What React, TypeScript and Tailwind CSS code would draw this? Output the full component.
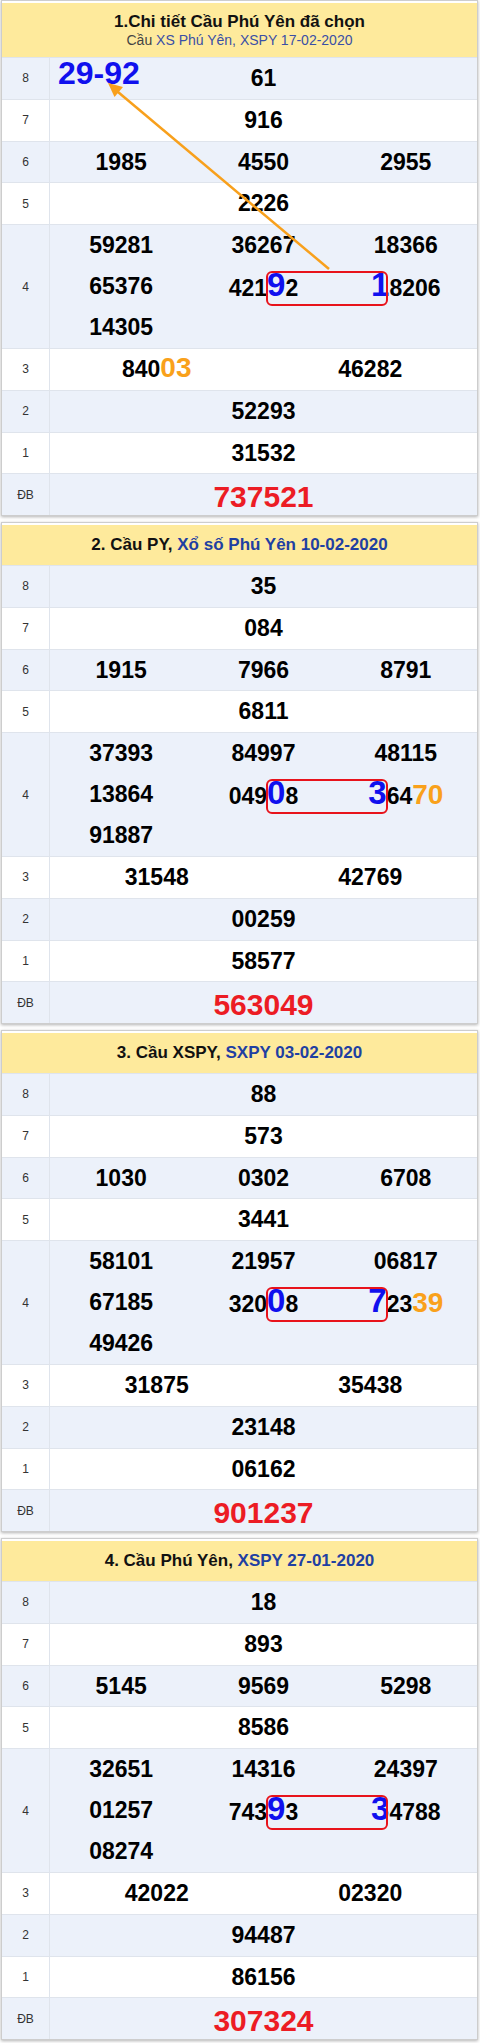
import type { ReactNode } from "react";

type Block = {
  head: ReactNode;
  tall?: boolean;
  r8: string;
  r7: string;
  r6: string[];
  r5: string;
  r4: string[][];
  r3: string[];
  r2: string;
  r1: string;
  db: string;
};

const blue = "text-[#1f40a2]";

const blocks: Block[] = [
  {
    tall: true,
    head: (
      <div className="flex flex-col items-center">
        <div className="text-[17px] leading-[20px] font-bold text-[#111]">1.Chi tiết Cầu Phú Yên đã chọn</div>
        <div className="text-[14px] leading-[17px] text-[#3a4fa6]">
          <span className="text-[#444]">Cầu</span> XS Phú Yên, XSPY 17-02-2020
        </div>
      </div>
    ),
    r8: "61",
    r7: "916",
    r6: ["1985", "4550", "2955"],
    r5: "2226",
    r4: [["59281", "36267", "18366"], ["65376", "421[9]2", "[1]8206"], ["14305"]],
    r3: ["840{03}", "46282"],
    r2: "52293",
    r1: "31532",
    db: "737521",
  },
  {
    head: (
      <div className="text-[17px] font-bold text-[#111]">
        2. Cầu PY, <span className={blue}>Xổ số Phú Yên 10-02-2020</span>
      </div>
    ),
    r8: "35",
    r7: "084",
    r6: ["1915", "7966", "8791"],
    r5: "6811",
    r4: [["37393", "84997", "48115"], ["13864", "049[0]8", "[3]64{70}"], ["91887"]],
    r3: ["31548", "42769"],
    r2: "00259",
    r1: "58577",
    db: "563049",
  },
  {
    head: (
      <div className="text-[17px] font-bold text-[#111]">
        3. Cầu XSPY, <span className={blue}>SXPY 03-02-2020</span>
      </div>
    ),
    r8: "88",
    r7: "573",
    r6: ["1030", "0302", "6708"],
    r5: "3441",
    r4: [["58101", "21957", "06817"], ["67185", "320[0]8", "[7]23{39}"], ["49426"]],
    r3: ["31875", "35438"],
    r2: "23148",
    r1: "06162",
    db: "901237",
  },
  {
    head: (
      <div className="text-[17px] font-bold text-[#111]">
        4. Cầu Phú Yên, <span className={blue}>XSPY 27-01-2020</span>
      </div>
    ),
    r8: "18",
    r7: "893",
    r6: ["5145", "9569", "5298"],
    r5: "8586",
    r4: [["32651", "14316", "24397"], ["01257", "743[9]3", "[3]4788"], ["08274"]],
    r3: ["42022", "02320"],
    r2: "94487",
    r1: "86156",
    db: "307324",
  },
];

// [x] = big blue digit, {x} = big orange digits
function Num({ s }: { s: string }) {
  const parts = s.match(/\[[^\]]+\]|\{[^}]+\}|[^[{]+/g) || [];
  return (
    <span className="text-[23px] font-bold text-black">
      {parts.map((p, i) => {
        if (p.startsWith("["))
          return (
            <span key={i} className="text-[33px] leading-none text-[#1010ee]">
              {p.slice(1, -1)}
            </span>
          );
        if (p.startsWith("{"))
          return (
            <span key={i} className="text-[28px] leading-none text-[#f9a11b]">
              {p.slice(1, -1)}
            </span>
          );
        return <span key={i}>{p}</span>;
      })}
    </span>
  );
}

const cols: Record<number, string> = { 1: "grid-cols-1", 2: "grid-cols-2", 3: "grid-cols-3" };

function Row({ label, items, alt, db, extra }: { label: string; items: string[]; alt: boolean; db?: boolean; extra?: ReactNode }) {
  return (
    <div className={`flex h-[41.75px] border-t border-[#dfe4ec] ${alt ? "bg-[#ecf1fa]" : "bg-white"}`}>
      <div className="w-[48px] shrink-0 border-r border-[#dfe4ec] flex items-center justify-center text-[12px] text-[#333]">
        {label}
      </div>
      <div className={`relative flex-1 grid ${cols[items.length]} items-center justify-items-center`}>
        {items.map((it, i) =>
          db ? (
            <span key={i} className="text-[30px] font-bold text-[#ec1c24]">{it}</span>
          ) : (
            <Num key={i} s={it} />
          )
        )}
        {extra}
      </div>
    </div>
  );
}

function Table({ b, first }: { b: Block; first?: boolean }) {
  return (
    <div className="w-[477px] border border-[#cdcdcd] bg-white pt-[2px] shadow-[0_1px_3px_rgba(0,0,0,0.3)] mb-[6px]">
      <div className={`${b.tall ? "h-[54px]" : "h-[40px]"} bg-[#feea9c] flex items-center justify-center`}>{b.head}</div>
      <Row
        label="8"
        items={[b.r8]}
        alt
        extra={
          first ? (
            <span className="absolute left-[8px] top-[-1px] text-[32px] leading-none font-bold text-[#1010ee]">29-92</span>
          ) : null
        }
      />
      <Row label="7" items={[b.r7]} alt={false} />
      <Row label="6" items={b.r6} alt />
      <Row label="5" items={[b.r5]} alt={false} />
      <div className="flex h-[124px] border-t border-[#dfe4ec] bg-[#ecf1fa]">
        <div className="w-[48px] shrink-0 border-r border-[#dfe4ec] flex items-center justify-center text-[12px] text-[#333]">4</div>
        <div className="relative flex-1 flex flex-col">
          {b.r4.map((line, li) => (
            <div key={li} className="h-[41.33px] grid grid-cols-3 items-center justify-items-center">
              {line.map((it, i) => (
                <Num key={i} s={it} />
              ))}
            </div>
          ))}
          <div className="absolute left-[216px] top-[46px] w-[122px] h-[35px] border-2 border-[#e8131b] rounded-[6px]" />
        </div>
      </div>
      <Row label="3" items={b.r3} alt={false} />
      <Row label="2" items={[b.r2]} alt />
      <Row label="1" items={[b.r1]} alt={false} />
      <Row label="ĐB" items={[b.db]} alt db />
    </div>
  );
}

export default function App() {
  return (
    <div className="relative w-[480px] bg-white pl-[1px] font-['Liberation_Sans',Arial,sans-serif]">
      {blocks.map((b, i) => (
        <Table key={i} b={b} first={i === 0} />
      ))}
      <svg className="absolute left-0 top-0 pointer-events-none" width="480" height="300" viewBox="0 0 480 300">
        <line x1="329" y1="269" x2="118" y2="92" stroke="#f8a01c" strokeWidth="2.5" />
        <polygon points="108,83 114.5,97 123,87" fill="#f8a01c" />
      </svg>
    </div>
  );
}
